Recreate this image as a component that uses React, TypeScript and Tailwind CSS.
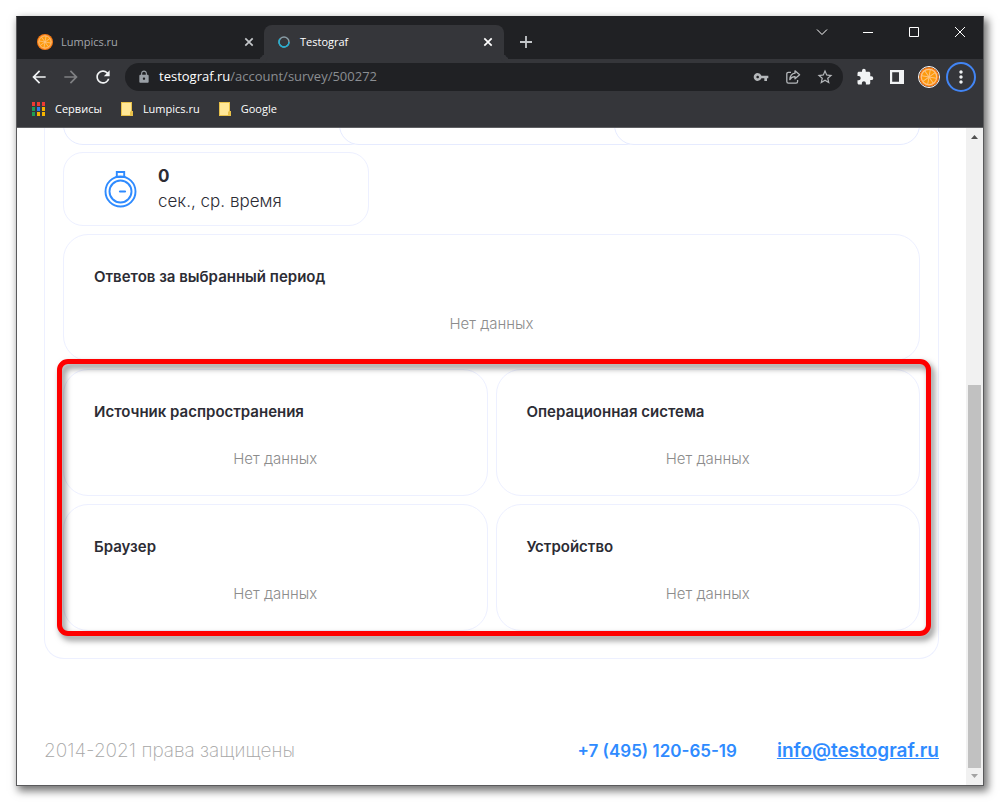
import type { ReactNode } from 'react'
import {
  MdArrowBack,
  MdArrowForward,
  MdExtension,
  MdLock,
  MdMoreVert,
  MdRefresh,
  MdStarBorder,
  MdVpnKey,
} from 'react-icons/md'

const EMPTY = 'Нет данных'

const breakdowns = ['Источник распространения', 'Операционная система', 'Браузер', 'Устройство']

const SPOKES = [10, 55, 100, 145]

function OrangeIcon({ className }: { className: string }) {
  return (
    <svg viewBox="0 0 24 24" className={className} aria-hidden="true">
      <circle cx="12" cy="12" r="12" fill="#fb7e14" />
      <circle cx="12" cy="12" r="9.3" fill="#fd9a0c" stroke="#fdc583" strokeWidth="1.5" />
      {SPOKES.map((angle) => (
        <path
          key={angle}
          d="M12 3 V21"
          stroke="#fdc583"
          strokeWidth="1.1"
          transform={`rotate(${angle} 12 12)`}
        />
      ))}
    </svg>
  )
}

function CloseIcon() {
  return (
    <svg viewBox="0 0 16 16" className="size-4" aria-hidden="true">
      <path d="M4.3 4.3 L11.7 11.7 M11.7 4.3 L4.3 11.7" stroke="currentColor" strokeWidth="1.7" />
    </svg>
  )
}

function ShareIcon() {
  return (
    <svg viewBox="0 0 16 16" className="size-4" fill="none" stroke="currentColor" strokeWidth="1.3" aria-hidden="true">
      <path d="M6 3.3 H3.4 Q1.8 3.3 1.8 4.9 V12.6 Q1.8 14.2 3.4 14.2 H11 Q12.6 14.2 12.6 12.6 V11" />
      <path d="M10 1.8 L14.6 5.8 L10 9.8 V7.6 Q6.6 7.5 4.8 10.6 Q5.2 4.9 10 4.2 Z" strokeLinejoin="round" />
    </svg>
  )
}

function SidePanelIcon() {
  return (
    <svg viewBox="0 0 16 16" className="size-4" aria-hidden="true">
      <path d="M1 1 H15 V15 H1 Z M3.2 3.2 V12.8 H10 V3.2 Z" fill="currentColor" fillRule="evenodd" />
    </svg>
  )
}

function AppsIcon() {
  const colors = ['#ee3b33', '#ee3b33', '#ee3b33', '#1e9e55', '#2b7de9', '#f5b400', '#1e9e55', '#f5b400', '#f5b400']
  return (
    <svg viewBox="0 0 16 16" className="size-4" aria-hidden="true">
      {colors.map((fill, i) => (
        <rect key={i} x={1 + (i % 3) * 5} y={1 + Math.floor(i / 3) * 5} width="3" height="4" fill={fill} />
      ))}
    </svg>
  )
}

function FolderIcon() {
  return (
    <svg viewBox="0 0 16 16" className="size-4" aria-hidden="true">
      <path d="M2 1 H13 V10 H14 V15 H2 Z" fill="#e8c14a" />
      <path d="M3 2 H12 V10.5 H11 V14 H3 Z" fill="#ffe797" />
    </svg>
  )
}

function StopwatchIcon() {
  return (
    <svg
      viewBox="0 0 33 38"
      className="h-[38px] w-[33px]"
      fill="none"
      stroke="#2f8bff"
      strokeWidth="1.9"
      aria-hidden="true"
    >
      <path d="M12.8 7 V2 H20.2 V7" />
      <path d="M11.5 7 H21.5" />
      <circle cx="16.5" cy="21.5" r="15" />
      <circle cx="16.5" cy="21.5" r="11" />
      <path d="M16 21.5 H21" strokeWidth="2.2" strokeLinecap="round" />
    </svg>
  )
}

interface TabProps {
  title: string
  icon: ReactNode
  active?: boolean
}

function Tab({ title, icon, active }: TabProps) {
  return (
    <div
      className={
        active
          ? 'relative flex h-[34px] w-60 items-center rounded-t-lg bg-[#35363a] pr-2 pl-3 text-white'
          : 'flex h-[34px] w-60 items-center pr-[7px] pl-[13px] text-[#a3a7ac]'
      }
    >
      {active && (
        <>
          <span className="absolute bottom-0 -left-2 size-2 rounded-br-lg shadow-[4px_4px_0_0_#35363a]" />
          <span className="absolute -right-2 bottom-0 size-2 rounded-bl-lg shadow-[-4px_4px_0_0_#35363a]" />
        </>
      )}
      <span className="grid size-4 place-items-center">{icon}</span>
      <span className="ml-2 flex-1">{title}</span>
      <button type="button" aria-label="Закрыть вкладку" className={active ? 'text-white' : 'text-[#c4c7ca]'}>
        <CloseIcon />
      </button>
    </div>
  )
}

function IconButton({ label, children, className = '' }: { label: string; children: ReactNode; className?: string }) {
  return (
    <button type="button" aria-label={label} className={`grid h-7 w-8 shrink-0 place-items-center ${className}`}>
      {children}
    </button>
  )
}

function WindowButton({ label, d }: { label: string; d: string }) {
  return (
    <button type="button" aria-label={label} className="grid h-[29px] w-[46px] place-items-center text-white">
      <svg viewBox="0 0 12 12" className="size-3" fill="none" stroke="currentColor" aria-hidden="true">
        <path d={d} />
      </svg>
    </button>
  )
}

function BrowserChrome() {
  return (
    <header className="font-['Open_Sans',sans-serif] text-[11px]">
      <div className="flex h-[42px] bg-[#202124] pl-[7px]">
        <div className="flex flex-1 items-end">
          <Tab title="Lumpics.ru" icon={<OrangeIcon className="size-4" />} />
          <Tab
            active
            title="Testograf"
            icon={
              <svg viewBox="0 0 12 12" className="size-3" fill="none" strokeWidth="1.4" aria-hidden="true">
                <circle cx="6" cy="6" r="5" stroke="#8a9da6" />
                <path d="M11 6 A5 5 0 1 1 2 3" stroke="#1fb0d4" />
              </svg>
            }
          />
          <button type="button" aria-label="Новая вкладка" className="ml-3 grid h-[34px] w-5 place-items-center text-[#c4c7ca]">
            <svg viewBox="0 0 12 12" className="size-3" aria-hidden="true">
              <path d="M6 0 V12 M0 6 H12" stroke="currentColor" strokeWidth="1.8" />
            </svg>
          </button>
        </div>
        <WindowButton label="Поиск вкладок" d="M1 3.5 L6 8.5 L11 3.5" />
        <WindowButton label="Свернуть" d="M1 6.5 H11" />
        <WindowButton label="Развернуть" d="M1.5 1.5 H10.5 V10.5 H1.5 Z" />
        <WindowButton label="Закрыть" d="M1 1 L11 11 M11 1 L1 11" />
      </div>

      <div className="border-b border-[#5f6063] bg-[#35363a] pb-1">
        <div className="flex h-9 items-center px-1.5 text-[#f1f3f4]">
          <IconButton label="Назад">
            <MdArrowBack className="size-5" />
          </IconButton>
          <IconButton label="Вперёд" className="text-[#7f8083]">
            <MdArrowForward className="size-5" />
          </IconButton>
          <IconButton label="Обновить">
            <MdRefresh className="size-5" />
          </IconButton>
          <div className="mx-1.5 flex h-7 flex-1 items-center rounded-full bg-[#202124] pr-0.5 pl-3 text-[#b4b7ba]">
            <MdLock className="size-3.5 text-[#9aa0a6]" />
            <div
              role="textbox"
              aria-label="Адресная строка"
              className="ml-2 flex-1 text-[13px] text-[#8b8e92]"
            >
              <span className="text-white">testograf.ru</span>/account/survey/500272
            </div>
            <IconButton label="Пароли">
              <MdVpnKey className="size-4" />
            </IconButton>
            <IconButton label="Поделиться">
              <ShareIcon />
            </IconButton>
            <IconButton label="В закладки">
              <MdStarBorder className="size-[18px]" />
            </IconButton>
          </div>
          <IconButton label="Расширения">
            <MdExtension className="size-[18px]" />
          </IconButton>
          <IconButton label="Боковая панель">
            <SidePanelIcon />
          </IconButton>
          <IconButton label="Профиль">
            <OrangeIcon className="size-[22px] rounded-full border border-white" />
          </IconButton>
          <button
            type="button"
            aria-label="Меню"
            className="mx-px grid size-[30px] place-items-center rounded-full border-2 border-[#4285f4]"
          >
            <MdMoreVert className="size-5" />
          </button>
        </div>
        <nav className="flex h-7 items-center gap-[17px] pl-3.5 text-white">
          <a href="#services" className="flex items-center gap-2">
            <AppsIcon />
            Сервисы
          </a>
          <a href="#lumpics" className="flex items-center gap-2">
            <FolderIcon />
            Lumpics.ru
          </a>
          <a href="#google" className="flex items-center gap-2">
            <FolderIcon />
            Google
          </a>
        </nav>
      </div>
    </header>
  )
}

function DataCard({ title }: { title: string }) {
  return (
    <section className="rounded-[25px] border border-[#edf0ff] px-[30px] pt-[30px] pb-6">
      <h2 className="text-[15px] leading-6 font-semibold text-[#2c2c34]">{title}</h2>
      <p className="mt-[23px] text-center text-[15px] leading-6 font-light text-[#8c8c8c]">{EMPTY}</p>
    </section>
  )
}

function Scrollbar() {
  return (
    <div className="flex w-[17px] shrink-0 flex-col items-center bg-[#f1f1f1]">
      <svg viewBox="0 0 17 17" className="size-[17px]" aria-hidden="true">
        <path d="M5 11 L8.5 7 L12 11 Z" fill="#505050" />
      </svg>
      <div className="flex w-[13px] flex-1 flex-col">
        <div className="grow-[240]" />
        <div className="grow-[383] bg-[#c1c1c1]" />
      </div>
      <svg viewBox="0 0 17 17" className="size-[17px]" aria-hidden="true">
        <path d="M5 6 L8.5 10 L12 6 Z" fill="#a3a3a3" />
      </svg>
    </div>
  )
}

export default function App() {
  return (
    <div className="flex min-h-screen bg-white p-4">
      <div className="flex flex-1 flex-col border border-[#5a5a5c] border-t-[#202124] bg-white shadow-[3px_4px_8px_1px_rgba(0,0,0,0.55)]">
        <BrowserChrome />

        <div className="flex flex-1">
          <main className="flex flex-1 flex-col px-[27px] font-['Inter',sans-serif]">
            <div className="rounded-b-[20px] border border-t-0 border-[#edf0ff] px-[18px] pb-[27px]">
              <div className="flex h-[17px] items-end justify-between overflow-hidden">
                <div className="h-[74px] w-[306px] shrink-0 rounded-[20px] border border-[#e6ebff] bg-white" />
                <div className="-ml-[31px] h-[74px] w-[306px] shrink-0 rounded-[20px] border border-[#e6ebff] bg-white" />
                <div className="-ml-[31px] h-[74px] w-[306px] shrink-0 rounded-[20px] border border-[#e6ebff] bg-white" />
              </div>

              <div className="mt-[7px] flex h-[74px] w-[306px] items-center rounded-[20px] border border-[#edf0ff] pl-10">
                <StopwatchIcon />
                <div className="ml-[21px] text-[17px] leading-[25px] text-[#2c2c34]">
                  <p className="font-bold">0</p>
                  <p className="font-light">сек., ср. время</p>
                </div>
              </div>

              <div className="mt-2">
                <DataCard title="Ответов за выбранный период" />
              </div>

              <div className="relative mt-2 grid grid-cols-2 gap-2">
                {breakdowns.map((title) => (
                  <DataCard key={title} title={title} />
                ))}
                <div className="pointer-events-none absolute -top-2.5 -right-[11px] -bottom-[5px] -left-1.5 rounded-[11px] border-5 border-[#fe0000] drop-shadow-[3px_4px_3px_rgba(0,0,0,0.5)]" />
              </div>
            </div>

            <footer className="mt-auto flex items-center pb-5 text-[19px] leading-7">
              <span className="flex-1 font-extralight text-[#a6a6a6]">2014-2021 права защищены</span>
              <a href="tel:+74951206519" className="text-[17px] font-semibold text-[#2f8bff]">
                +7 (495) 120-65-19
              </a>
              <a href="mailto:info@testograf.ru" className="ml-10 font-semibold text-[#2f8bff] underline">
                info@testograf.ru
              </a>
            </footer>
          </main>
          <Scrollbar />
        </div>
      </div>
    </div>
  )
}
